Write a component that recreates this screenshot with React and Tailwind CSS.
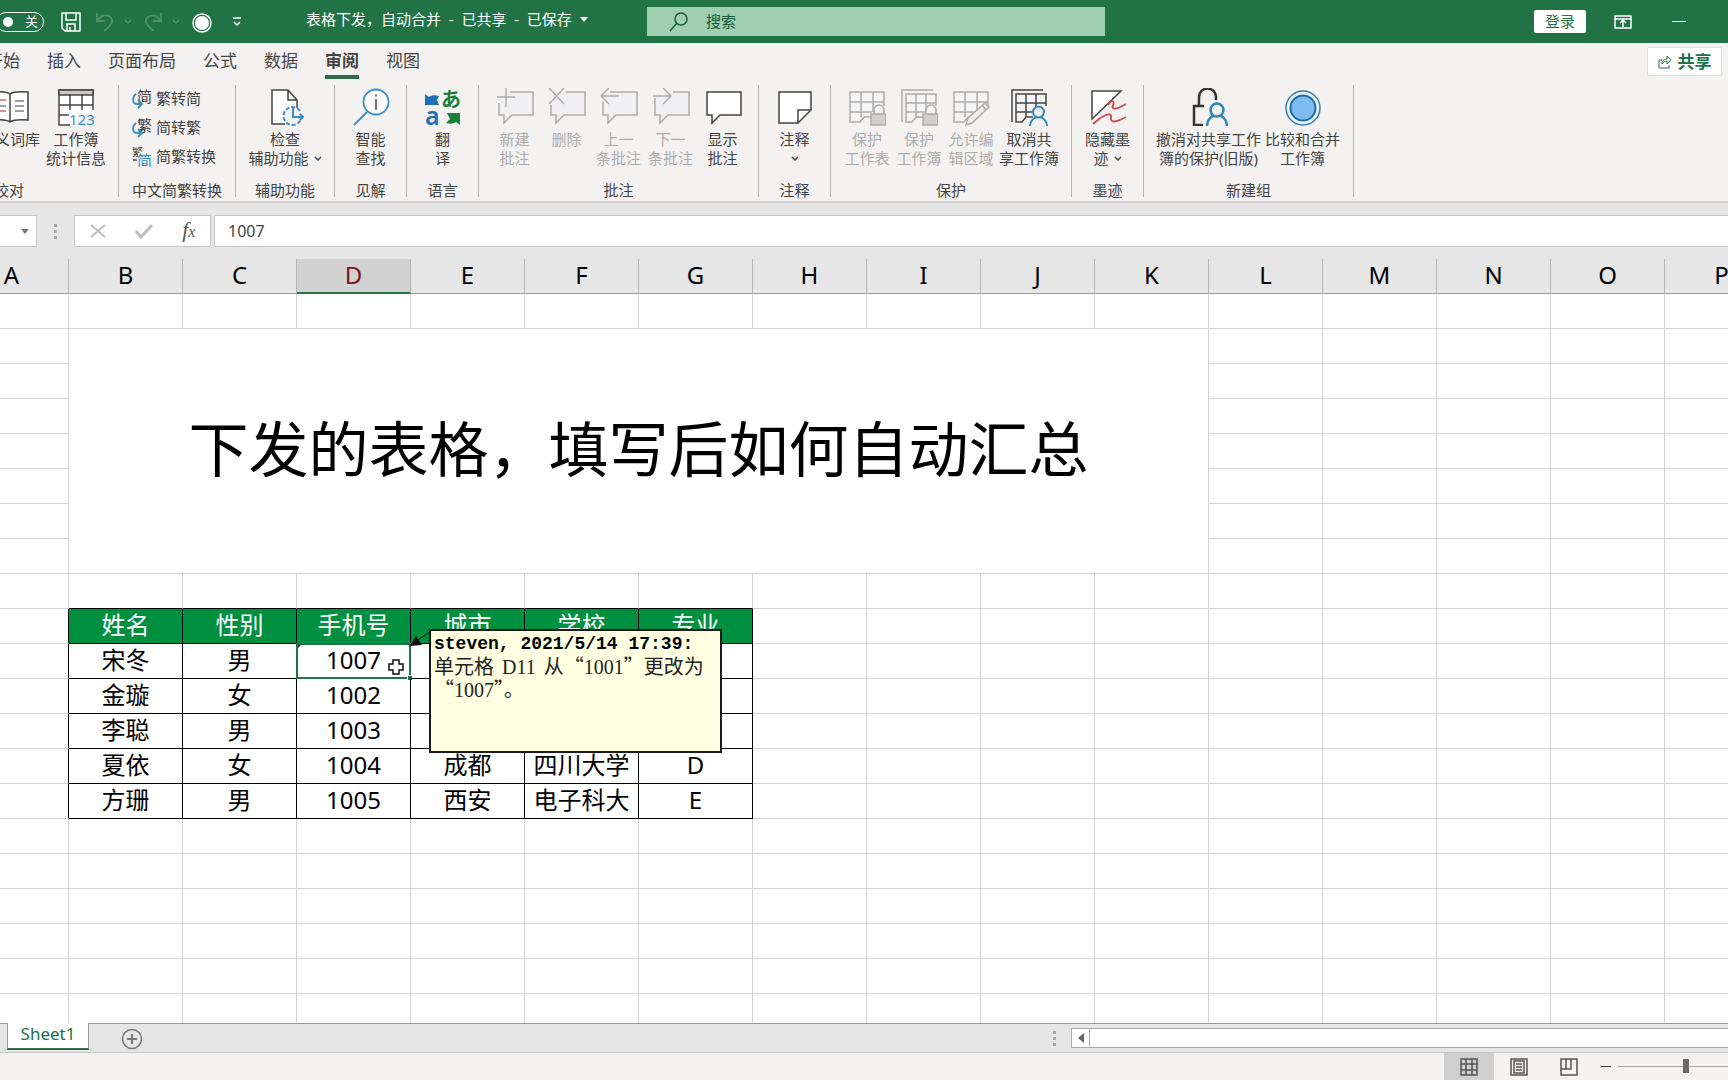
import { useState } from "react";
import clsx from "clsx";

const TABS = ["开始", "插入", "页面布局", "公式", "数据", "审阅", "视图"];
const COLUMNS = "ABCDEFGHIJKLMNOP".split("");
const ROW_COUNT = 21;

const HEADER_ROW = 10;
const TABLE = {
  10: ["姓名", "性别", "手机号", "城市", "学校", "专业"],
  11: ["宋冬", "男", "1007", "", "", ""],
  12: ["金璇", "女", "1002", "", "", ""],
  13: ["李聪", "男", "1003", "", "", ""],
  14: ["夏依", "女", "1004", "成都", "四川大学", "D"],
  15: ["方珊", "男", "1005", "西安", "电子科大", "E"],
};

/* ---------- icons ---------- */

function Icon({ size = 38, className, children }) {
  return (
    <svg width={size} height={size} viewBox={`0 0 ${size} ${size}`} fill="none" stroke="currentColor" strokeWidth="1.5" className={clsx("shrink-0", className)} aria-hidden="true">
      {children}
    </svg>
  );
}

const BookIcon = () => (
  <Icon>
    <path d="M19 6c-3-2.500-9-2.500-18-2v28c9-.5 15-.5 18 2 3-2.500 9-2.500 18-2V4c-9-.5-15-.5-18 2zm0 0v28" fill="#fff" />
    <path d="M24 13h9M24 18h9M24 23h9" stroke="#7f7f7f" />
    <path d="M5 12h10M5 23h10" stroke="#e0646c" />
    <path d="M5 18h10" stroke="#7f7f7f" />
  </Icon>
);

const StatsIcon = () => (
  <Icon>
    <path d="M13 37H2V2h34v20" fill="#fff" />
    <path d="M2 2h34v5H2z" fill="#c8c8c8" />
    <path d="M2 17h34M2 27h10M13 7v15M25 7v15" />
    <text x="12" y="37" fontSize="15" fontFamily="Noto Sans" fill="#3a8fc8" stroke="none">123</text>
  </Icon>
);

const CheckIcon = () => (
  <Icon>
    <path d="M19 36H6V2h16l9 10v8M22 2v10h9" fill="#fff" />
    <path d="M34 23a9 9 0 1 0 1 8" fill="#f3f2f1" stroke="#3a8fc8" strokeWidth="2" strokeDasharray="4 2" />
    <path d="M27 20v9h10m-3-3 3 3-3 3" stroke="#3a8fc8" strokeWidth="2" />
  </Icon>
);

const LookupIcon = () => (
  <Icon>
    <circle cx="24" cy="14" r="12.500" fill="#fff" stroke="#3a8fc8" strokeWidth="1.800" />
    <path d="M15 24 2 37" stroke="#3a8fc8" strokeWidth="2" />
    <path d="M24 11v11M24 6.500v2" stroke="#444" />
  </Icon>
);

const TranslateIcon = () => (
  <Icon className="text-[#1f6fb5]">
    <path d="M1 6l4 3c3-2 6-2 10-1l-2 4 2 5H1z" fill="currentColor" stroke="none" />
    <path d="M36 37l-4-3c-3 2-6 2-10 1l4-4-3-6h13z" fill="#188038" stroke="none" />
    <text x="1" y="37" fontSize="25" fontFamily="Noto Sans" fontWeight="600" fill="currentColor" stroke="none">a</text>
    <text x="17" y="19" fontSize="20" fontFamily="Noto Sans CJK JP" fontWeight="700" fill="#188038" stroke="none">あ</text>
  </Icon>
);

const BUBBLES = {
  add: { body: "M14 4h23v23H16l-8 8v-8H3V15", mark: "M10 0v19M1 9h18" },
  remove: { body: "M18 4h19v23H16l-8 8v-8H3V17", mark: "M1 0l15 16M16 0 1 16" },
  prev: { body: "M10 4h27v23H16l-8 8v-8H3V14", mark: "M19 8H1m8-8L1 8l8 8" },
  next: { body: "M21 4h16v23H16l-8 8v-8H3V10", mark: "M1 8h18M11 0l8 8-8 8" },
  show: { body: "M3 4h34v23H16l-8 8v-8H3z", mark: "" },
};

const BubbleIcon = ({ kind }) => (
  <Icon>
    <path d={BUBBLES[kind].body} fill={kind === "show" ? "#fff" : "#f0f0f2"} />
    <path d={BUBBLES[kind].mark} />
  </Icon>
);

const NoteIcon = () => (
  <Icon>
    <path d="M3 4h32v18L22 35H3z" fill="#fff" />
    <path d="M22 35V22h13" />
  </Icon>
);

function Grid({ offset = 0 }) {
  return (
    <>
      {offset > 0 && <path d="M2 34V2h31" />}
      <path d={offset ? "M6 6h30v20L20 34l-6-1-4 3H6z" : "M2 4h34v22L20 33h-5l-3 3H2z"} fill="#f5f5f5" stroke="none" />
      <path d={offset ? "M36 18V6H6v28h6l4-5h7M6 15h30M6 24h19M16 6v23M26 6v18" : "M36 18V4H2v30h10l4-5h7M2 14h34M2 24h22M13 4v25M25 4v20"} />
    </>
  );
}

const Lock = () => (
  <>
    <path d="M26 26v-4a5 5 0 0 1 10 0v4" fill="#f3f2f1" />
    <path d="M23 26h15v11H23z" fill="#cfcfcf" />
  </>
);

const Person = () => (
  <g stroke="#3187b8" strokeWidth="2" fill="#f3f2f1">
    <path d="M20 38a8.500 9 0 0 1 17 0" />
    <circle cx="28.500" cy="24" r="5.500" />
  </g>
);

const ProtectSheetIcon = () => <Icon><Grid /><Lock /></Icon>;
const ProtectBookIcon = () => <Icon><Grid offset={4} /><Lock /></Icon>;
const EditRangeIcon = () => (
  <Icon>
    <Grid />
    <path d="m14 37 2-7 17-15 4 4-17 16zM30 17l4 5" fill="#eee" />
  </Icon>
);
const UnshareIcon = () => <Icon><Grid offset={4} /><Person /></Icon>;

const InkIcon = () => (
  <Icon>
    <path d="M3 3h29L3 31z" fill="#fff" />
    <path d="M19 17c4-6 7-4 5 0s1 6 13-1M4 36c8-8 19-13 18-7s4 6 15 0" stroke="#d0454f" strokeWidth="1.800" />
  </Icon>
);

const UnlockIcon = () => (
  <Icon>
    <path d="M9 18V9a8 8 0 0 1 17 0v3M13 37H4V18h10" strokeWidth="2.500" stroke="#333" />
    <g stroke="#3187b8" strokeWidth="2.500" fill="#f3f2f1">
      <path d="M17 38a10 11 0 0 1 20 0" />
      <circle cx="27" cy="22" r="6.500" />
    </g>
  </Icon>
);

const CompareIcon = () => (
  <Icon>
    <circle cx="19" cy="20" r="17" fill="#e6f6fd" stroke="#3f7fa8" />
    <circle cx="19" cy="20" r="12.500" fill="#7dbbf0" stroke="#2568a8" strokeWidth="2" />
  </Icon>
);

const ConvertIcon = ({ char }) => (
  <Icon size={20}>
    <text x="5" y="13" fontSize="15" fontFamily="Noto Sans CJK SC" fill="#444" stroke="none">{char}</text>
    <path d="M4 5C0 8 0 15 5 15h4m-3-4 4 4-4 4" stroke="#3a8fc8" strokeWidth="1.800" />
  </Icon>
);

const ConvertBothIcon = () => (
  <Icon size={20}>
    <text x="0" y="9" fontSize="11" fontFamily="Noto Sans CJK SC" fill="#444" stroke="none">繁</text>
    <path d="M1 13h4" />
    <path d="M6 6h14v14H6z" fill="#f3f2f1" stroke="none" />
    <text x="5" y="19" fontSize="15" fontFamily="Noto Sans CJK SC" fill="#2b8ac6" stroke="none">简</text>
  </Icon>
);

const Chevron = ({ className }) => (
  <svg width="8" height="6" viewBox="0 0 8 6" fill="none" stroke="currentColor" strokeWidth="1.500" className={clsx("inline-block", className)} aria-hidden="true">
    <path d="m1 1 3 3 3-3" />
  </svg>
);

/* ---------- title bar ---------- */

function TitleBar() {
  return (
    <header className="flex h-[43px] shrink-0 items-center bg-[#217346] text-[15px] text-white">
      <div className="flex w-[306px] shrink-0 items-center">
        <button className="-ml-1 flex h-5 w-12 items-center gap-3 rounded-full border border-white pl-[6px] text-[13px] leading-none">
          <span className="size-[10px] rounded-full bg-white" />
          关
        </button>
        <button aria-label="保存" className="ml-4">
          <Icon size={22}>
            <path d="M2 2h18v18H5l-3-3zM6 2v7h10V2M7 20v-7h8v7M10 16v4" />
          </Icon>
        </button>
        <button aria-label="撤消" className="ml-3 flex items-center gap-2 text-[#4f946d]">
          <Icon size={22}>
            <path d="M3 2v8h8M3 10c4-6 9-7 13-4s3 7-6 14" strokeWidth="1.800" />
          </Icon>
          <Chevron />
        </button>
        <button aria-label="恢复" className="ml-[10px] flex items-center gap-2 text-[#4f946d]">
          <Icon size={22}>
            <path d="M19 2v8h-8M19 10C15 4 10 3 6 6s-3 7 6 14" strokeWidth="1.800" />
          </Icon>
          <Chevron />
        </button>
        <button aria-label="录制" className="ml-3 pt-[2px]">
          <Icon size={20}>
            <circle cx="10" cy="10" r="9" />
            <circle cx="10" cy="10" r="7" fill="#fff" stroke="none" />
          </Icon>
        </button>
        <button aria-label="自定义快速访问工具栏" className="ml-5">
          <Icon size={10}>
            <path d="M1 1h8M2 5l3 3 3-3" />
          </Icon>
        </button>
      </div>

      <button className="-mt-[5px] flex w-[341px] shrink-0 items-center gap-2 whitespace-pre">
        {"表格下发，自动合并  -  已共享  -  已保存"}
        <svg width="8" height="5" viewBox="0 0 8 5" fill="currentColor" aria-hidden="true"><path d="M0 0h8L4 5z" /></svg>
      </button>

      <label className="flex h-[29px] w-[458px] shrink-0 items-center gap-[17px] bg-[#9fceb1] pl-[22px] text-[#185c37]">
        <Icon size={20}>
          <circle cx="12" cy="7" r="6" />
          <path d="m8 11-7 8" />
        </Icon>
        <input type="search" aria-label="搜索" placeholder="搜索" className="min-w-0 flex-1 bg-transparent outline-none placeholder:text-[#185c37]" />
      </label>

      <div className="ml-auto flex items-center">
        <button className="h-[23px] w-[52px] rounded-xs bg-white leading-none text-[#217346]">登录</button>
        <button aria-label="功能区显示选项" className="ml-[28px]">
          <Icon size={18}>
            <path d="M1 3h16v12H1zM1 6h16M9 14V8M6 10l3-3 3 3" />
          </Icon>
        </button>
        <button aria-label="最小化" className="mr-[42px] ml-[40px] h-5 w-[14px]">
          <span className="block h-px bg-white" />
        </button>
      </div>
    </header>
  );
}

/* ---------- ribbon ---------- */

function TabRow() {
  const [active, setActive] = useState("审阅");
  return (
    <nav className="flex h-9 shrink-0 items-start justify-between bg-[#f3f2f1]">
      <div className="-ml-[14px] flex gap-[27px]">
        {TABS.map(t => (
          <button
            key={t}
            onClick={() => setActive(t)}
            className={clsx(
              "h-9 border-b-4 pt-1 text-[17px] leading-7 text-[#444]",
              t === active ? "border-[#2f6b4a] font-bold" : "border-transparent"
            )}
          >
            {t}
          </button>
        ))}
      </div>
      <button className="mt-1 mr-[6px] flex h-[29px] w-[75px] items-center justify-center gap-[6px] rounded-xs border border-[#e1dfdd] bg-white text-[17px] leading-none font-bold text-[#217346]">
        <Icon size={14}>
          <path d="M4 5H1v8h10v-3M4 9c0-4 3-5 5-5V1l4 4-4 4V6c-2 0-4 1-5 3z" strokeWidth="1" />
        </Icon>
        共享
      </button>
    </nav>
  );
}

function Group({ label, className, children }) {
  return (
    <section className={clsx("flex shrink-0 flex-col justify-between border-r border-[#b8b6b4]", className)}>
      <div className="flex justify-center">{children}</div>
      <h2 className="text-center leading-[14px]">{label}</h2>
    </section>
  );
}

function BigButton({ icon, lines, disabled, arrow, className = "w-[52px]" }) {
  return (
    <button disabled={disabled} className={clsx("flex shrink-0 flex-col items-center pt-[3px] whitespace-nowrap", disabled && "text-[#aeacaa]", className)}>
      {icon}
      <span className="mt-1 leading-[19px]">{lines[0]}</span>
      <span className="flex items-center gap-[5px] leading-[19px]">
        {lines[1]}
        {arrow && <Chevron className={lines[1] ? "" : "my-[7px]"} />}
      </span>
    </button>
  );
}

function SmallButton({ icon, label }) {
  return (
    <button className="flex h-[29px] items-center gap-1 leading-none">
      {icon}
      {label}
    </button>
  );
}

function Ribbon() {
  return (
    <div className="flex h-[124px] shrink-0 overflow-hidden border-b-2 border-[#d2d0ce] bg-[#f3f2f1] pt-[6px] pb-1 text-[15px] text-[#444]">
      <Group label="校对" className="-ml-[100px] w-[219px] [&>div]:justify-end [&>div]:pr-[9px]">
        <BigButton icon={<BookIcon />} lines={["同义词库", ""]} className="w-[66px]" />
        <BigButton icon={<StatsIcon />} lines={["工作簿", "统计信息"]} className="w-[66px]" />
      </Group>
      <Group label="中文简繁转换" className="w-[117px]">
        <div className="-mt-px flex flex-col pr-[6px]">
          <SmallButton icon={<ConvertIcon char="简" />} label="繁转简" />
          <SmallButton icon={<ConvertIcon char="繁" />} label="简转繁" />
          <SmallButton icon={<ConvertBothIcon />} label="简繁转换" />
        </div>
      </Group>
      <Group label="辅助功能" className="w-[99px]">
        <BigButton icon={<CheckIcon />} lines={["检查", "辅助功能"]} arrow className="w-[80px]" />
      </Group>
      <Group label="见解" className="w-[72px]">
        <BigButton icon={<LookupIcon />} lines={["智能", "查找"]} />
      </Group>
      <Group label="语言" className="w-[72px]">
        <BigButton icon={<TranslateIcon />} lines={["翻", "译"]} />
      </Group>
      <Group label="批注" className="w-[280px]">
        <BigButton icon={<BubbleIcon kind="add" />} lines={["新建", "批注"]} disabled />
        <BigButton icon={<BubbleIcon kind="remove" />} lines={["删除", ""]} disabled />
        <BigButton icon={<BubbleIcon kind="prev" />} lines={["上一", "条批注"]} disabled />
        <BigButton icon={<BubbleIcon kind="next" />} lines={["下一", "条批注"]} disabled />
        <BigButton icon={<BubbleIcon kind="show" />} lines={["显示", "批注"]} />
      </Group>
      <Group label="注释" className="w-[72px]">
        <BigButton icon={<NoteIcon />} lines={["注释", ""]} arrow />
      </Group>
      <Group label="保护" className="w-[241px]">
        <BigButton icon={<ProtectSheetIcon />} lines={["保护", "工作表"]} disabled />
        <BigButton icon={<ProtectBookIcon />} lines={["保护", "工作簿"]} disabled />
        <BigButton icon={<EditRangeIcon />} lines={["允许编", "辑区域"]} disabled />
        <BigButton icon={<UnshareIcon />} lines={["取消共", "享工作簿"]} className="w-[64px]" />
      </Group>
      <Group label="墨迹" className="w-[72px]">
        <BigButton icon={<InkIcon />} lines={["隐藏墨", "迹"]} arrow />
      </Group>
      <Group label="新建组" className="w-[210px]">
        <BigButton icon={<UnlockIcon />} lines={["撤消对共享工作", "簿的保护(旧版)"]} className="w-[108px]" />
        <BigButton icon={<CompareIcon />} lines={["比较和合并", "工作簿"]} className="w-[80px]" />
      </Group>
    </div>
  );
}

const Dots = () => (
  <span className="flex flex-col gap-[3px]">
    {[0, 1, 2].map(i => <span key={i} className="size-[3px] bg-[#a6a6a6]" />)}
  </span>
);

function FormulaBar() {
  const [value, setValue] = useState("1007");
  return (
    <div className="flex h-14 shrink-0 items-start bg-[#e6e6e6] pt-3">
      <button aria-label="名称框" className="flex h-8 w-[37px] items-center justify-end border border-l-0 border-[#c6c6c6] bg-white pr-[7px] text-[#777]">
        <svg width="8" height="5" viewBox="0 0 8 5" fill="currentColor" aria-hidden="true"><path d="M0 0h8L4 5z" /></svg>
      </button>
      <div className="flex h-8 w-[37px] items-center justify-center"><Dots /></div>
      <div className="flex h-8 w-[137px] items-center justify-around border border-[#c6c6c6] bg-white text-[#bdbdbd]">
        <button aria-label="取消">
          <Icon size={16}><path d="m1 2 14 12M15 2 1 14" strokeWidth="2" /></Icon>
        </button>
        <button aria-label="输入">
          <Icon size={18}><path d="m1 9 5 6L17 3" strokeWidth="3" /></Icon>
        </button>
        <button aria-label="插入函数" className="font-['Liberation_Serif'] text-[22px] leading-none text-[#555] italic">
          f<span className="text-base">x</span>
        </button>
      </div>
      <input
        aria-label="编辑栏"
        value={value}
        onChange={e => setValue(e.target.value)}
        className="ml-[3px] h-8 min-w-0 flex-1 border border-r-0 border-[#c6c6c6] bg-white px-[13px] text-base text-[#444] outline-none"
      />
    </div>
  );
}

/* ---------- sheet ---------- */

function CellNote() {
  return (
    <>
      <svg width="26" height="18" viewBox="0 0 26 18" className="absolute -top-[14px] left-[112px] z-20" aria-hidden="true">
        <path d="M1 15 21 2" stroke="#111" strokeWidth="1" />
        <path d="M1 16 7 6l6 9z" fill="#111" />
      </svg>
      <div className="absolute -top-[15px] left-[132px] z-10 h-[124px] w-[293px] border-2 border-[#1a1a1a] bg-[#ffffe1] px-[3px] pt-[2px] text-left font-['Noto_Sans_CJK_SC',sans-serif] text-xl leading-[22px] text-[#222]">
        <p className="font-['Liberation_Mono'] text-lg leading-[22px] font-bold whitespace-nowrap text-black">steven, 2021/5/14 17:39:</p>
        <p className="whitespace-nowrap">
          单元格<span className="mx-2 font-['Liberation_Serif']">D11</span>从“<span className="font-['Liberation_Serif']">1001</span>”更改为
        </p>
        <p className="whitespace-nowrap">
          “<span className="font-['Liberation_Serif']">1007</span>”。
        </p>
      </div>
    </>
  );
}

function ActiveCell({ value }) {
  return (
    <>
      {value}
      <svg width="5" height="5" viewBox="0 0 5 5" className="absolute top-0 left-0" aria-hidden="true"><path d="M0 0h5L0 5z" fill="#1b2a5c" /></svg>
      <span className="absolute -inset-px border-2 border-[#217346]" />
      <span className="absolute -right-[3px] -bottom-[3px] size-[6px] border border-white bg-[#217346]" />
      <svg width="16" height="16" viewBox="0 0 16 16" className="absolute top-[15px] left-[91px]" aria-hidden="true">
        <path d="M5 1h6v4h4v6h-4v4H5v-4H1V5h4z" fill="#fff" stroke="#111" strokeWidth="1.500" />
      </svg>
      <CellNote />
    </>
  );
}

function Cell({ row, col }) {
  const data = TABLE[row] && col >= 1 && col <= 6 ? TABLE[row][col - 1] : null;
  // edges next to the bordered range are drawn by the cells above and to the left of it
  const blackRight = TABLE[row] && col <= 6;
  const blackBottom = row >= HEADER_ROW - 1 && row <= 15 && col >= 1 && col <= 6;
  const active = row === 11 && col === 3;
  return (
    <td
      className={clsx(
        "relative h-[35px] border-r border-b p-0 pb-[2px] text-center whitespace-nowrap",
        blackRight ? "border-r-black" : "border-r-[#d4d4d4]",
        blackBottom ? "border-b-black" : "border-b-[#d4d4d4]",
        row === HEADER_ROW && data !== null && "bg-[#00903f] text-white"
      )}
    >
      {active ? <ActiveCell value={data} /> : data}
    </td>
  );
}

function Row({ row }) {
  // B2:K8 is one merged block
  const inBanner = row >= 2 && row <= 8;
  return (
    <tr>
      {COLUMNS.map((c, i) => {
        if (inBanner && i >= 1 && i <= 10) {
          if (row !== 2 || i !== 1) return null;
          return (
            <td key={c} colSpan={10} rowSpan={7} className="border-r border-b border-[#d4d4d4] p-0 pb-1 text-center text-[60px]">
              下发的表格，填写后如何自动汇总
            </td>
          );
        }
        return <Cell key={c} row={row} col={i} />;
      })}
    </tr>
  );
}

function Sheet() {
  return (
    <main className="min-h-0 flex-1 overflow-hidden bg-white">
      <table className="-ml-[45px] w-[1824px] table-fixed border-separate border-spacing-0 font-['Noto_Sans','Noto_Sans_CJK_SC',sans-serif] text-2xl leading-none text-black">
        <thead>
          <tr>
            {COLUMNS.map(c => (
              <th
                key={c}
                scope="col"
                className={clsx(
                  "h-[35px] border-r border-r-[#b5b5b5] p-0 pb-[2px] font-normal",
                  c === "D" ? "border-b-2 border-b-[#217346] bg-[#d2d2d2] text-[#7a1420]" : "border-b border-b-[#9b9b9b] bg-[#e6e6e6]"
                )}
              >
                {c}
              </th>
            ))}
          </tr>
        </thead>
        <tbody>
          {Array.from({ length: ROW_COUNT }, (_, i) => <Row key={i} row={i + 1} />)}
        </tbody>
      </table>
    </main>
  );
}

/* ---------- bottom bars ---------- */

function SheetTabs() {
  return (
    <div className="flex h-[30px] shrink-0 items-start border-t border-b border-t-[#9b9b9b] border-b-[#c6c6c6] bg-[#e6e6e6]">
      <button className="-mt-px ml-[7px] h-[27px] w-[82px] border-x border-b-2 border-x-[#9b9b9b] border-b-[#2f6b4a] bg-white pb-1 text-[17px] leading-5 text-[#217346]">
        Sheet1
      </button>
      <button aria-label="新工作表" className="mt-1 ml-[32px] text-[#777]">
        <Icon size={22}>
          <circle cx="11" cy="11" r="9.500" />
          <path d="M11 6v10M6 11h10" strokeWidth="2" />
        </Icon>
      </button>
      <div className="ml-auto flex w-[675px] items-center gap-[15px] pt-1">
        <Dots />
        <div className="flex h-5 flex-1 border border-r-0 border-[#ababab] bg-white">
          <button aria-label="向左滚动" className="flex w-[18px] items-center justify-center border-r border-[#ababab] text-[#666]">
            <svg width="6" height="10" viewBox="0 0 6 10" fill="currentColor" aria-hidden="true"><path d="M6 0v10L0 5z" /></svg>
          </button>
        </div>
      </div>
    </div>
  );
}

function StatusBar() {
  return (
    <footer className="flex h-[27px] shrink-0 items-stretch justify-end overflow-hidden bg-[#f3f2f1] text-[#555]">
      <button aria-label="普通" className="flex w-[50px] items-center justify-center bg-[#cfcfcf]">
        <Icon size={18}><path d="M1 1h16v16H1zM6 1v16M12 1v16M1 6h16M1 12h16" /></Icon>
      </button>
      <button aria-label="页面布局视图" className="flex w-[50px] items-center justify-center">
        <Icon size={18}><path d="M1 1h16v16H1zM4 3h10v12H4zM6 6h6M6 9h6M6 12h6" /></Icon>
      </button>
      <button aria-label="分页预览" className="flex w-[50px] items-center justify-center">
        <Icon size={18}><path d="M1 1h16v16H1zM1 11h10V1M6 1v10" /></Icon>
      </button>
      <button aria-label="缩小" className="flex w-[24px] items-center justify-center">
        <span className="h-px w-[10px] bg-[#444]" />
      </button>
      <div className="flex w-[110px] items-center">
        <input
          type="range"
          aria-label="缩放"
          defaultValue="50"
          className="h-[14px] w-[136px] shrink-0 appearance-none bg-transparent [&::-webkit-slider-runnable-track]:h-px [&::-webkit-slider-runnable-track]:bg-[#a6a6a6] [&::-webkit-slider-thumb]:-mt-[7px] [&::-webkit-slider-thumb]:h-[14px] [&::-webkit-slider-thumb]:w-[6px] [&::-webkit-slider-thumb]:appearance-none [&::-webkit-slider-thumb]:bg-[#6a6a6a]"
        />
      </div>
    </footer>
  );
}

export default function App() {
  return (
    <div className="flex h-screen flex-col overflow-hidden bg-[#f3f2f1] font-['Noto_Sans','Noto_Sans_CJK_SC',sans-serif]">
      <TitleBar />
      <TabRow />
      <Ribbon />
      <FormulaBar />
      <Sheet />
      <SheetTabs />
      <StatusBar />
    </div>
  );
}
